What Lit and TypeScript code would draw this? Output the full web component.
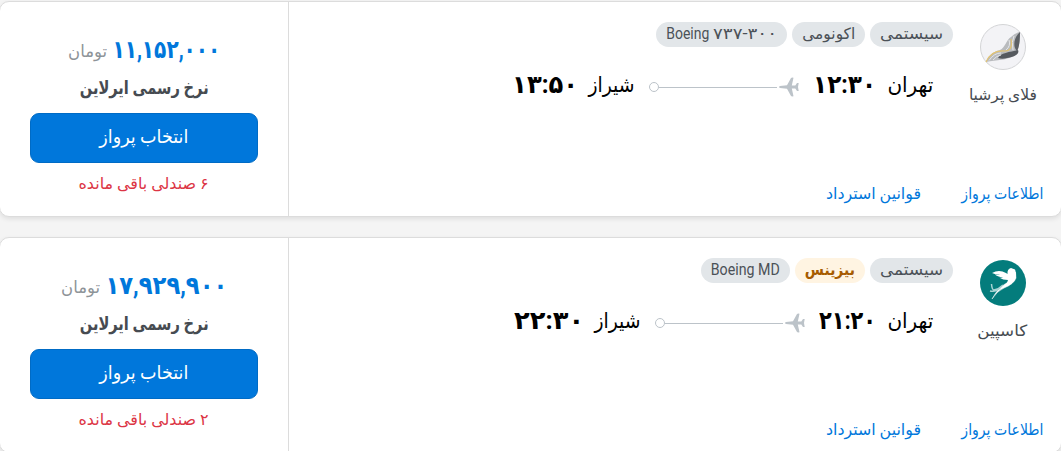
import { LitElement, html, css, svg, nothing } from 'lit';
import { customElement, property } from 'lit/decorators.js';

/** Text that is condensed or stretched horizontally to fill a given measure. */
@customElement('fit-text')
class FitText extends LitElement {
  @property({ type: Number }) measure = 0;
  static styles = css`
    :host { display: block; flex: none; white-space: nowrap; }
    .inner { display: inline-block; transform-origin: 100% 50%; float: right; }
  `;
  render() {
    return html`<span class="inner"><slot></slot></span>`;
  }
  updated() {
    const inner = this.renderRoot.querySelector('.inner') as HTMLElement;
    this.style.width = this.measure + 'px';
    const natural = inner.getBoundingClientRect().width;
    if (natural) {
      inner.style.marginLeft = this.measure - inner.offsetWidth + 'px';
      inner.style.transform = `scaleX(${this.measure / natural})`;
    }
  }
}

interface Tag { text: string; w: number; warm?: boolean; ltr?: boolean; num?: string; numW?: number }
interface Flight {
  airline: string; airlineW: number; logo: 'persia' | 'caspian'; tags: Tag[];
  dep: string; depW: number; arr: string; arrW: number;
  price: string; priceW: number; seats: string;
}

const flights: Flight[] = [
  {
    airline: 'فلای پرشیا', airlineW: 68, logo: 'persia',
    tags: [{ text: 'سیستمی', w: 63 }, { text: 'اکونومی', w: 53 }, { text: 'Boeing', w: 43, ltr: true, num: '۷۳۷-۳۰۰', numW: 64 }],
    dep: '۱۲:۳۰', depW: 63, arr: '۱۳:۵۰', arrW: 66,
    price: '۱۱,۱۵۲,۰۰۰', priceW: 108, seats: '۶ صندلی باقی مانده',
  },
  {
    airline: 'کاسپین', airlineW: 50, logo: 'caspian',
    tags: [{ text: 'سیستمی', w: 63 }, { text: 'بیزینس', w: 50, warm: true }, { text: 'Boeing MD', w: 69, ltr: true }],
    dep: '۲۱:۲۰', depW: 57, arr: '۲۲:۳۰', arrW: 70,
    price: '۱۷,۹۲۹,۹۰۰', priceW: 122, seats: '۲ صندلی باقی مانده',
  },
];

const persia = svg`
  <circle cx="23" cy="23" r="22.5" fill="#f3f3f6" stroke="#d3d4d6"/>
  <path d="M6 38C9 30 15 27 20 26C25 24 26 16 31 13Q35 9 40 8C40 17 39 28 34 32C27 36 17 36 6 38Z" fill="#b9bbbe"/>
  <path d="M40 8C40 17 39 24 37 27C33 24 33 14 40 8Z" fill="#5c6065"/>
  <path d="M29 16Q31 22 26 26M34 12Q31 18 33 26" fill="none" stroke="#e6e7e9"/>
  <path d="M18 34C20 29 30 28 38 26C40 30 34 33 27 34Q22 35.500 18 34Z" fill="#55595e"/>
  <path d="M9 36.500Q14 29 21 29M13 36Q16 32 21 31" fill="none" stroke="#e9eaeb" stroke-width=".9"/>
  <path d="M6 38C10 29 16 26 25 27Q33 27 31 15" fill="none" stroke="#e3c36f" stroke-width="1.1"/>`;

const caspian = svg`
  <circle cx="23" cy="23" r="23" fill="#047c7c"/>
  <path d="M12 13Q19 9 26 13L27.500 14Q27 9 31 8L35 9.500L35.500 11Q37 17 34 21Q30 25 22 27Q27 24 28 20Q23 20 19 17.500Q21 18 23 17.500Q17 16.500 15 14.500Q18 15 20 14.500Q15 14.500 12 13Z" fill="#fff"/>
  <path d="M35.500 12Q35 20 25 24Q18 28 12 39Q17 31 24 28Q34 24 36 18Z" fill="#fff" stroke="#fff" stroke-width=".5"/>
  <path d="M11.500 24Q12 30 14 30Q19 29 23 25M10 31Q16 32.500 21 27" fill="none" stroke="#a9d3d3" stroke-width="1.5"/>`;

@customElement('app-root')
class AppRoot extends LitElement {
  static styles = css`
    :host {
      display: block; direction: rtl; height: 451px; overflow: hidden; box-sizing: border-box;
      padding-top: 1px; background: #f4f4f4; color: #464b51;
      font-family: Roboto, 'DejaVu Sans', sans-serif;
    }
    .card {
      display: flex; height: 216px; box-sizing: border-box; margin: 0 -1px 20px;
      background: #fff; border: 1px solid #dcdcdc; border-radius: 10px;
      box-shadow: 0 2px 5px rgba(0, 0, 0, .09);
    }
    .flight { flex: 1; display: flex; flex-direction: column; justify-content: space-between; }
    .top { display: flex; padding: 20px 0 0; }
    .airline { width: 108px; display: flex; flex-direction: column; align-items: center; padding: 2px 1px 0 0; box-sizing: border-box; margin-right: 4px; }
    .airline svg { display: block; width: 46px; height: 46px; }
    .name { font-size: 15.500px; line-height: 24px; margin-top: 13px; }
    .details { display: flex; flex-direction: column; }
    .tags { display: flex; gap: 5px; margin-right: -4px; }
    .tag { height: 25px; line-height: 24px; padding: 0 10px; border-radius: 13px; background: #e2e6e9; font-size: 15.500px; color: #4b5157; }
    .tag.warm { background: #fff4e2; color: #a65b00; font-weight: 700; }
    .tag.latin { direction: ltr; display: flex; gap: 4px; font-size: 16px; }
    .route { display: flex; align-items: center; height: 40px; margin: 18px 16px 0 0; color: #000; }
    .city { font-size: 21px; line-height: 40px; }
    .time { font-size: 25px; line-height: 40px; font-weight: 700; margin-right: 11px; direction: ltr; }
    .time.arrival { margin-right: 10px; }
    .path { display: block; width: 150px; height: 20px; margin: 4px 14px 0 15px; }
    .links { display: flex; gap: 40px; padding: 0 18px 10px 0; color: #0077db; font-size: 16px; line-height: 24px; }
    .buy { width: 289px; box-sizing: border-box; border-right: 1px solid #dcdcdc; padding: 31px 30px 0; display: flex; flex-direction: column; align-items: center; }
    .price { display: flex; align-items: center; gap: 5px; height: 34px; }
    .amount { color: #0077db; font-weight: 700; font-size: 25px; line-height: 34px; direction: ltr; }
    .unit { color: #8d9398; font-size: 16.500px; line-height: 34px; padding-top: 4px; }
    .rate { font-weight: 700; font-size: 18px; line-height: 26px; margin-top: 8px; }
    .select {
      width: 228px; height: 50px; margin-top: 12px; border: 1px solid #006bc5; border-radius: 9px; padding: 0;
      background: #0077db; color: #fff; font: inherit; font-size: 19px; line-height: 46px;
      display: flex; justify-content: center;
    }
    .seats { color: #dc3545; font-size: 16px; line-height: 24px; margin-top: 9px; }
  `;

  tag(t: Tag) {
    return html`<div class="tag ${t.warm ? 'warm' : ''} ${t.ltr ? 'latin' : ''}">
      <fit-text .measure=${t.w}>${t.text}</fit-text>${t.num ? html`<fit-text .measure=${t.numW}>${t.num}</fit-text>` : nothing}
    </div>`;
  }

  card(f: Flight) {
    return html`<article class="card">
      <section class="flight">
        <div class="top">
          <div class="airline">
            <svg viewBox="0 0 46 46">${f.logo === 'persia' ? persia : caspian}</svg>
            <fit-text class="name" .measure=${f.airlineW}>${f.airline}</fit-text>
          </div>
          <div class="details">
            <div class="tags">${f.tags.map(t => this.tag(t))}</div>
            <div class="route">
              <fit-text class="city" .measure=${46}>تهران</fit-text>
              <fit-text class="time" .measure=${f.depW}>${f.dep}</fit-text>
              <svg class="path" viewBox="0 0 150 20">
                <circle cx="5" cy="10" r="4.5" fill="#fff" stroke="#bcc3c9"/>
                <path d="M10 10.5H128" stroke="#bcc3c9"/>
                <path d="M131 9L138 8.300L142 1Q142.500 .4 144.500 .7L142.800 8.400L146.300 8.400L148 6H149.700L149 10L149.700 14H148L146.300 11.600L142.800 11.600L144.500 19.300Q142.500 19.600 142 19L138 11.700L131 11Q129 10 131 9Z" fill="#bcc3c9"/>
              </svg>
              <fit-text class="city" .measure=${46}>شیراز</fit-text>
              <fit-text class="time arrival" .measure=${f.arrW}>${f.arr}</fit-text>
            </div>
          </div>
        </div>
        <nav class="links">
          <fit-text .measure=${82}>اطلاعات پرواز</fit-text>
          <fit-text .measure=${95}>قوانین استرداد</fit-text>
        </nav>
      </section>
      <aside class="buy">
        <div class="price">
          <fit-text class="amount" .measure=${f.priceW}>${f.price}</fit-text>
          <fit-text class="unit" .measure=${39}>تومان</fit-text>
        </div>
        <fit-text class="rate" .measure=${129}>نرخ رسمی ایرلاین</fit-text>
        <button class="select"><fit-text .measure=${89}>انتخاب پرواز</fit-text></button>
        <fit-text class="seats" .measure=${130}>${f.seats}</fit-text>
      </aside>
    </article>`;
  }

  render() {
    return html`${flights.map(f => this.card(f))}`;
  }
}
